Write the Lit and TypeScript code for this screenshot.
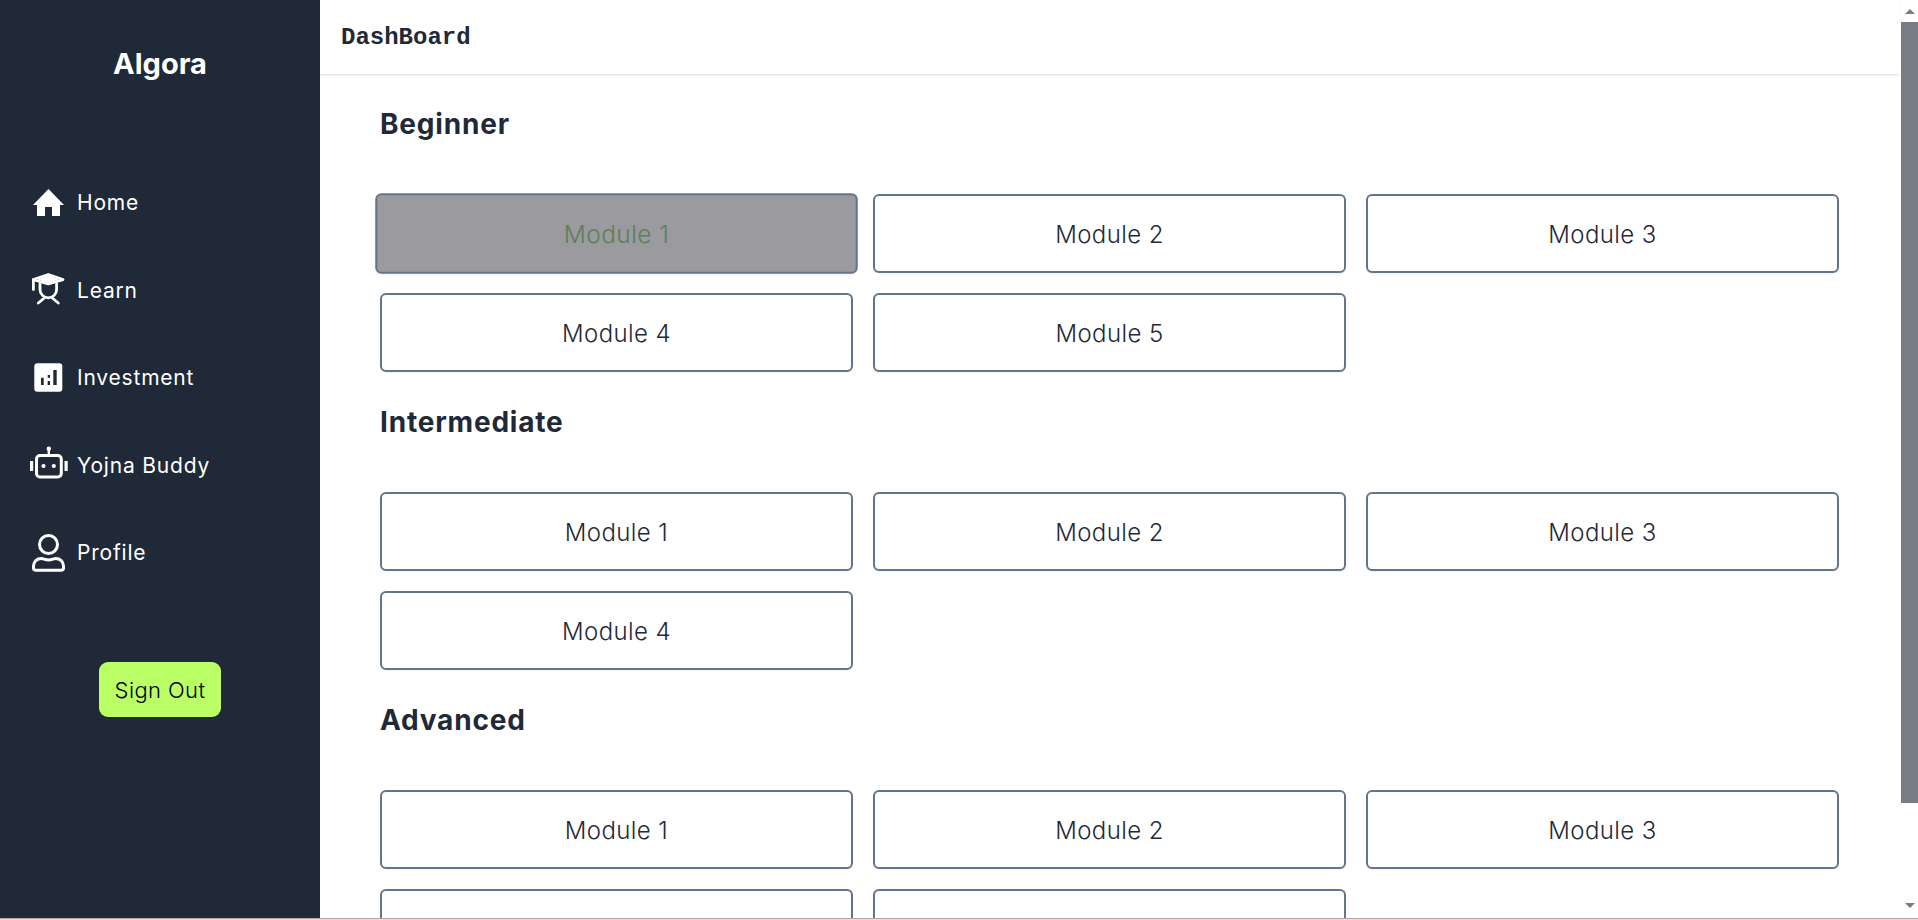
import { LitElement, html, css, svg } from "lit";
import { customElement } from "lit/decorators.js";

const NAV = [
  {
    label: "Home",
    icon: svg`<path fill="currentColor" fill-rule="evenodd" d="M19.5 7 35 23h-4v11h-8v-9h-7v9H8V23H4z"/>`,
  },
  {
    label: "Learn",
    icon: svg`<g fill="none" stroke="currentColor" stroke-width="2.8" stroke-linecap="round" stroke-linejoin="round">
      <path d="M19.300 5.500 34 10.600l-14.700 4.400-14.900-4.400z" />
      <path d="M4.400 11v9.500" />
      <path d="M11 15v5.500a8.300 8.300 0 0 0 16.600 0V15" />
      <path d="M9.300 34l6-5M29.300 34l-6-5" />
    </g>
    <path fill="currentColor" d="M19.300 6.600 30 10.600l-10.700 3.300-10.700-3.300z" />`,
  },
  {
    label: "Investment",
    icon: svg`<path fill="currentColor" fill-rule="evenodd" d="M8.300 6.300h22a3 3 0 0 1 3 3v22.400a3 3 0 0 1-3 3h-22a3 3 0 0 1-3-3V9.300a3 3 0 0 1 3-3zM12 20.700v7.300h2.700v-7.300zM18.700 18v2.700H21V18zM18.700 24v4H21v-4zM24.300 13v15h3.400V13z"/>`,
  },
  {
    label: "Yojna Buddy",
    icon: svg`<g fill="currentColor">
      <circle cx="19.800" cy="4.800" r="2.200" />
      <rect x="18.600" y="5" width="2.400" height="6.500" />
      <circle cx="14.500" cy="22" r="2.100" />
      <circle cx="24.800" cy="22" r="2.100" />
      <rect x="1" y="17" width="3.200" height="10" />
      <rect x="35.500" y="17" width="3.200" height="10" />
    </g>
    <rect x="7.500" y="11.500" width="24.800" height="21.500" rx="3.500" fill="none" stroke="currentColor" stroke-width="3" />`,
  },
  {
    label: "Profile",
    icon: svg`<g fill="none" stroke="currentColor" stroke-width="3" stroke-linejoin="round">
      <circle cx="19.500" cy="12.500" r="9" />
      <path d="M4.500 36v-2c0-4.500 3.500-7.500 7.800-7.500 2 0 4 1.500 7.200 1.500s5.200-1.500 7.200-1.500c4.300 0 7.800 3 7.800 7.500v2c0 1.500-1 2.300-2.500 2.300H7c-1.500 0-2.500-.8-2.500-2.300z" />
    </g>`,
  },
];

const SECTIONS = [
  { title: "Beginner", modules: 5 },
  { title: "Intermediate", modules: 4 },
  { title: "Advanced", modules: 5 },
];

@customElement("app-root")
export class AppRoot extends LitElement {
  static styles = css`
    :host {
      display: block;
      height: 100vh;
      overflow: hidden;
      font-family: Inter, "Liberation Sans", sans-serif;
      color: #1f2937;
      background: #fff;
    }

    .page {
      display: flex;
      height: 918px;
    }

    .strip {
      height: 2px;
      background: linear-gradient(#b8a8a8 50%, #f0d9d9 50%);
    }

    /* sidebar */
    .sidebar {
      flex: 0 0 320px;
      display: flex;
      flex-direction: column;
      align-items: stretch;
      background: #1f2937;
      color: #fff;
    }

    .logo {
      height: 114px;
      padding-top: 44px;
      line-height: 40px;
      font-size: 29px;
      font-weight: 700;
      text-align: center;
    }

    .nav-item {
      display: flex;
      align-items: center;
      gap: 8px;
      height: 87.5px;
      padding-left: 29px;
      font-size: 21px;
      letter-spacing: 0.8px;
    }

    .nav-item span {
      margin-top: 2px;
    }

    .nav-item svg {
      flex: none;
      width: 40px;
      height: 40px;
    }

    .sign-out {
      align-self: center;
      width: 122px;
      height: 55px;
      margin-top: 66.5px;
      padding: 0;
      border: none;
      border-radius: 9px;
      background: #bbff66;
      color: #000;
      font: inherit;
      font-size: 22px;
      font-weight: 300;
      letter-spacing: 0.4px;
    }

    /* main column */
    .main {
      flex: 1;
      min-width: 0;
      overflow: hidden;
    }

    .topbar {
      height: 74px;
      margin-right: 2px;
      padding-left: 21px;
      display: flex;
      align-items: center;
      border-bottom: 1px solid #e5e7eb;
      box-shadow: 0 1px 2px rgba(0, 0, 0, 0.05);
      font-family: "Liberation Mono", monospace;
      font-size: 24px;
      font-weight: 700;
    }

    .content {
      padding: 31px 0 0 60px;
    }

    .section + .section {
      margin-top: 32px;
    }

    h2 {
      margin: 0 0 52px;
      line-height: 36px;
      font-size: 28px;
      font-weight: 700;
      letter-spacing: 0.8px;
    }

    .grid {
      display: grid;
      grid-template-columns: repeat(3, 473px);
      gap: 20px;
    }

    .module {
      height: 79px;
      padding: 1px 0 0;
      border: 2px solid #64748b;
      border-radius: 6px;
      background: #fff;
      color: #1f2937;
      font: inherit;
      font-size: 24px;
      font-weight: 300;
      letter-spacing: 0.4px;
      box-shadow: 0 1px 2px rgba(0, 0, 0, 0.05);
    }

    .module.active {
      transform: scale(1.02);
      background: #9a9a9f;
      color: #5b8057;
    }

    /* page scrollbar */
    .scrollbar {
      flex: 0 0 17px;
      display: flex;
      flex-direction: column;
      align-items: center;
      background: #fff;
    }

    .arrow-up,
    .arrow-down {
      width: 0;
      height: 0;
      border-left: 5px solid transparent;
      border-right: 5px solid transparent;
    }

    .arrow-up {
      margin: 9px 0 8px;
      border-bottom: 5px solid #787c85;
    }

    .arrow-down {
      margin-top: 100px;
      border-top: 5px solid #787c85;
    }

    .thumb {
      align-self: stretch;
      height: 781px;
      background: #787c85;
    }
  `;

  render() {
    return html`
      <div class="page">
        <aside class="sidebar">
          <div class="logo">Algora</div>
          ${NAV.map(
            (item) => html`
              <div class="nav-item">
                <svg viewBox="0 0 40 40">${item.icon}</svg>
                <span>${item.label}</span>
              </div>
            `
          )}
          <button class="sign-out">Sign Out</button>
        </aside>
        <main class="main">
          <div class="topbar">DashBoard</div>
          <div class="content">
            ${SECTIONS.map(
              (section, s) => html`
                <section class="section">
                  <h2>${section.title}</h2>
                  <div class="grid">
                    ${Array.from({ length: section.modules }, (_, i) => {
                      const active = s === 0 && i === 0;
                      return html`<button class="module ${active ? "active" : ""}">Module ${i + 1}</button>`;
                    })}
                  </div>
                </section>
              `
            )}
          </div>
        </main>
        <div class="scrollbar">
          <div class="arrow-up"></div>
          <div class="thumb"></div>
          <div class="arrow-down"></div>
        </div>
      </div>
      <div class="strip"></div>
    `;
  }
}
